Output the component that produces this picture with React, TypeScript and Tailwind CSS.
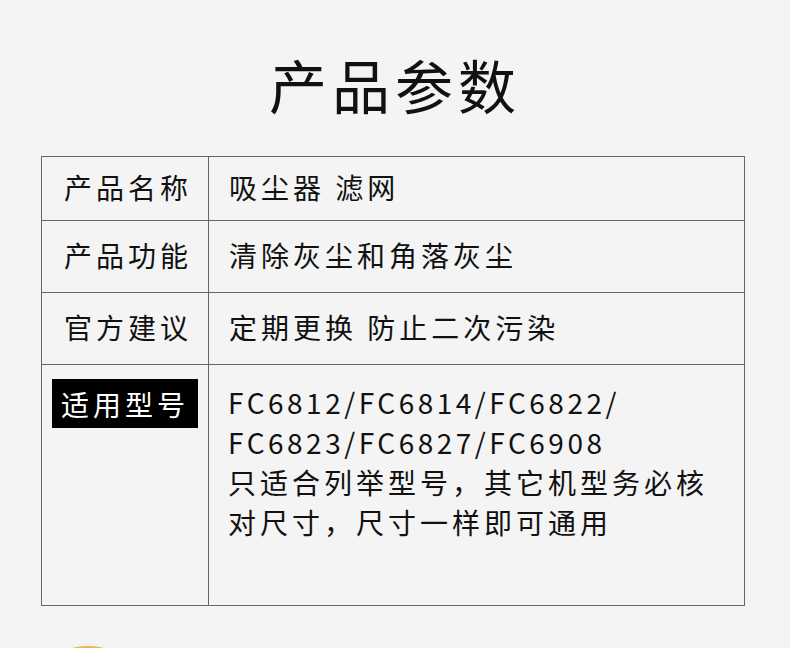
const rows = [
  { label: "产品名称", value: "吸尘器 滤网", h: "h-[64px]" },
  { label: "产品功能", value: "清除灰尘和角落灰尘", h: "h-[72px]" },
  { label: "官方建议", value: "定期更换 防止二次污染", h: "h-[72px]" },
];

const models = [
  { text: "FC6812/FC6814/FC6822/", latin: true },
  { text: "FC6823/FC6827/FC6908", latin: true },
  { text: "只适合列举型号，其它机型务必核", latin: false },
  { text: "对尺寸，尺寸一样即可通用", latin: false },
];

export default function App() {
  return (
    <div
      className="w-[790px] h-[648px] overflow-hidden bg-[#f4f4f4] text-[#111]"
      style={{ fontFamily: '"Noto Sans CJK SC", "Noto Sans", sans-serif' }}
    >
      <div className="h-[156px] pt-[54px] flex justify-center">
        <h1 className="text-[58px] leading-[60px] tracking-[5px] font-normal">
          产品参数
        </h1>
      </div>

      <div className="ml-[41px] w-[704px] border border-[#666] grid grid-cols-[167px_1fr]">
        {rows.map((r) => (
          <div key={r.label} className="contents">
            <div
              className={`${r.h} border-r border-b border-[#666] flex items-center pl-[22px] pb-[4px] text-[28px] tracking-[4px]`}
            >
              {r.label}
            </div>
            <div
              className={`${r.h} border-b border-[#666] flex items-center pl-[20px] pb-[4px] text-[28px] tracking-[4px]`}
            >
              {r.value}
            </div>
          </div>
        ))}
        <div className="h-[240px] border-r border-[#666] pt-[14px] pl-[10px]">
          <div className="w-[146px] h-[49px] bg-black text-white flex items-center justify-center text-[28px] tracking-[4px]">
            适用型号
          </div>
        </div>
        <div className="pt-[17px] pl-[19px] text-[28px] leading-[40px]">
          {models.map((m) => (
            <div
              key={m.text}
              className={m.latin ? "tracking-[3.5px]" : "tracking-[4px]"}
            >
              {m.text}
            </div>
          ))}
        </div>
      </div>

      <div className="mt-[40px] ml-[62px] w-[52px] h-[20px] rounded-[50%] bg-gradient-to-b from-[#f0b35a] to-[#d98a2b]" />
    </div>
  );
}
